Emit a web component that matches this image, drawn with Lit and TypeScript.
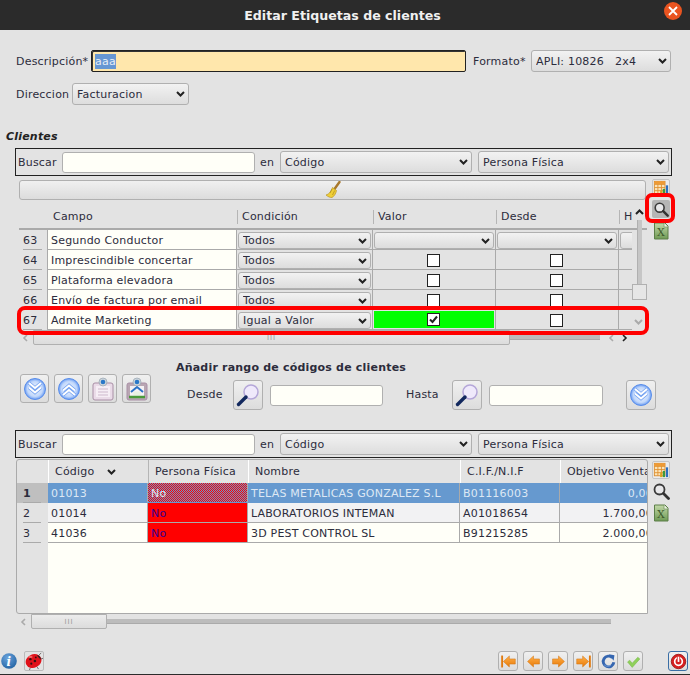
import { LitElement, html, css, svg } from "lit";
import { customElement } from "lit/decorators.js";

const chev = (c = "#222") => html`<svg class="chev" width="9" height="6" viewBox="0 0 9 6"><path d="M1 1l3.500 3.500L8 1" fill="none" stroke="${c}" stroke-width="2"/></svg>`;
const chartIcon = html`<svg viewBox="0 0 18 18" width="18" height="18"><rect x="1.500" y="1.500" width="12" height="14" fill="#fbe3b8" stroke="#d98a2b"/><path d="M1.500 5h12M1.500 8.500h12M1.500 12h12M5.500 1.500v14M9.500 1.500v14" stroke="#e0902f"/><rect x="1.500" y="1.500" width="12" height="3" fill="#ee9a35"/><rect x="8" y="12" width="2.500" height="5" fill="#d9a020"/><rect x="11" y="10" width="2.500" height="7" fill="#3d9a3d"/><rect x="14.500" y="6" width="2.500" height="11" fill="#2a6fc0"/></svg>`;
const lensIcon = html`<svg viewBox="0 0 18 18" width="18" height="18"><circle cx="7.500" cy="7.500" r="5" fill="#e8e8ea" stroke="#3a3a3a" stroke-width="1.800"/><path d="M11.500 11.500l5 5" stroke="#333" stroke-width="2.800" stroke-linecap="round"/></svg>`;
const excelIcon = html`<svg viewBox="0 0 18 18" width="18" height="18"><defs><linearGradient id="xg" x1="0" y1="0" x2="0" y2="1"><stop offset="0" stop-color="#c2d8a8"/><stop offset="1" stop-color="#6f9a55"/></linearGradient></defs><path d="M2.500 1H13l3 3v13H2.500z" fill="url(#xg)" stroke="#5d7f48"/><path d="M12 1v4h4" fill="#eef3e6" stroke="#7c9a68" stroke-width=".8"/><text x="9" y="14" font-family="DejaVu Serif" font-size="11" text-anchor="middle" fill="#3c5a2c">X</text></svg>`;
const broomIcon = html`<svg viewBox="0 0 16 18" width="16" height="18"><path d="M14.500 1L9.500 8" stroke="#a8782c" stroke-width="2.400" stroke-linecap="round"/><path d="M7.500 6.500l4 3c-.5 3-2.500 6-4.500 7-1.500.2-4-.6-6-2.500 3-.6 5-3.500 6.500-7.500z" fill="#f0cf35" stroke="#b8952a" stroke-width=".7"/><path d="M5 12l2-4M7.500 14l2.200-4.500" stroke="#a98a20" stroke-width=".7"/></svg>`;
const orbIcon = (up: boolean) => html`<svg viewBox="0 0 24 24" width="24" height="24"><defs><radialGradient id="og" cx=".5" cy=".5" r=".55"><stop offset="0" stop-color="#eef4ff"/><stop offset=".65" stop-color="#c2d8fb"/><stop offset="1" stop-color="#4a86f0"/></radialGradient></defs><circle cx="12" cy="12" r="10.500" fill="url(#og)" stroke="#5a8eea"/><path d="${up ? "M6 13.500l6-5 6 5M6 18l6-5 6 5" : "M6 6l6 5 6-5M6 10.500l6 5 6-5"}" fill="none" stroke="#6e9ef0" stroke-width="3.400"/><path d="${up ? "M6 13.500l6-5 6 5M6 18l6-5 6 5" : "M6 6l6 5 6-5M6 10.500l6 5 6-5"}" fill="none" stroke="#fff" stroke-width="2"/></svg>`;
const noteIcon = (home: boolean) => html`<svg viewBox="0 0 24 24" width="24" height="24"><rect x="2" y="6" width="20" height="17" rx="2" fill="${home ? "#b9a6b3" : "#eadbe8"}" stroke="#a98fa6"/>${home
  ? svg`<rect x="5" y="9" width="14" height="11" fill="#f4f1f4"/><path d="M6 15l6-5 6 5" fill="none" stroke="#2a72c8" stroke-width="2"/><rect x="8.500" y="14.500" width="7" height="4" fill="#e9f1e2"/><path d="M4 20h16" stroke="#4a9a3a" stroke-width="2.500"/>`
  : svg`<rect x="5" y="9" width="14" height="11" fill="#f6eef5"/><path d="M7 12h10M7 15h10M7 18h10" stroke="#cdb8cc"/>`}<circle cx="12" cy="5" r="4" fill="#cfd6dc" stroke="#8a9aa8" stroke-width=".6"/><circle cx="12" cy="5" r="2.300" fill="#2a78c8"/></svg>`;
const bigLens = html`<svg viewBox="0 0 26 26" width="26" height="26"><circle cx="16" cy="10" r="7" fill="#efe9fb" stroke="#b4a6d8" stroke-width="1.500"/><path d="M11 15l-7.500 7.500" stroke="#12285e" stroke-width="3.400" stroke-linecap="round"/></svg>`;
const navGrad = svg`<defs><linearGradient id="ng" x1="0" y1="0" x2="0" y2="1"><stop offset="0" stop-color="#ffb04a"/><stop offset="1" stop-color="#e87a08"/></linearGradient></defs>`;
const navIcons = {
  first: html`<svg viewBox="0 0 20 20" width="20" height="20">${navGrad}<path d="M2.500 3v14" stroke="#e07a10" stroke-width="2.200"/><path d="M4 10l7-6.500V7h7v6h-7v3.500z" fill="url(#ng)" stroke="#d2730e" stroke-width=".6"/></svg>`,
  prev: html`<svg viewBox="0 0 20 20" width="20" height="20">${navGrad}<path d="M3 10l7-6.500V7h7v6h-7v3.500z" fill="url(#ng)" stroke="#d2730e" stroke-width=".6"/></svg>`,
  next: html`<svg viewBox="0 0 20 20" width="20" height="20">${navGrad}<path d="M17 10l-7-6.500V7H3v6h7v3.500z" fill="url(#ng)" stroke="#d2730e" stroke-width=".6"/></svg>`,
  last: html`<svg viewBox="0 0 20 20" width="20" height="20">${navGrad}<path d="M17.500 3v14" stroke="#e07a10" stroke-width="2.200"/><path d="M16 10L9 3.500V7H2v6h7v3.500z" fill="url(#ng)" stroke="#d2730e" stroke-width=".6"/></svg>`,
};
const refreshIcon = html`<svg viewBox="0 0 20 20" width="20" height="20"><path d="M14.500 5.500A6.300 6.300 0 1 0 16.300 11" fill="none" stroke="#3566b0" stroke-width="3.400"/><path d="M10.500 1.500l6.500 1-1 6.500z" fill="#3566b0"/><path d="M5 14c2 2 6 2.500 8 0" fill="none" stroke="#7ea4dc" stroke-width="1"/></svg>`;
const checkIcon = html`<svg viewBox="0 0 20 20" width="20" height="20"><path d="M3 10.500l2.500-2 3 3.500 6.500-7 2.500 2-9 10z" fill="#8fd05a" stroke="#74b548" stroke-width=".6"/></svg>`;
const powerIcon = html`<svg viewBox="0 0 20 20" width="20" height="20"><circle cx="10" cy="10" r="8.500" fill="#d62020" stroke="#9a1010"/><circle cx="10" cy="10" r="4.500" fill="none" stroke="#fff" stroke-width="2"/><path d="M10 4.500v6" stroke="#d62020" stroke-width="4"/><path d="M10 4.500v6" stroke="#fff" stroke-width="2"/></svg>`;
const infoIcon = html`<svg viewBox="0 0 16 16" width="16" height="16"><defs><radialGradient id="ig" cx=".4" cy=".3" r=".8"><stop offset="0" stop-color="#6aa3dc"/><stop offset="1" stop-color="#1f5f9f"/></radialGradient></defs><circle cx="8" cy="8" r="7.800" fill="url(#ig)"/><text x="8" y="12.500" font-family="DejaVu Serif" font-style="italic" font-weight="700" font-size="12" text-anchor="middle" fill="#fff">i</text></svg>`;
const bugIcon = html`<svg viewBox="0 0 20 20" width="20" height="20"><path d="M15 4l3-3M17 8l3-1M13 16l2 3M6 17l-1 3" stroke="#444" stroke-width=".8"/><ellipse cx="9.500" cy="10" rx="9" ry="7.500" transform="rotate(-25 9.500 10)" fill="#e0121a"/><path d="M13 3.500a4.500 4.500 0 0 1 4.500 5z" fill="#222"/><circle cx="6" cy="8" r="1.300" fill="#311"/><circle cx="11" cy="10" r="1.400" fill="#311"/><circle cx="7" cy="13" r="1.200" fill="#311"/><circle cx="12" cy="6" r="1" fill="#311"/><ellipse cx="6" cy="5.500" rx="2.500" ry="1.200" fill="#ff8080" opacity=".7"/></svg>`;

const sel = (text: string, cls: string) => html`<div class="sel ${cls}"><select><option>${text}</option></select>${chev()}</div>`;

const searchBar = () => html`<div class="search">
  <span class="bl">Buscar</span>
  <input class="txt sinput" type="text" />
  <span class="en">en</span>
  ${sel("Código", "s1")}
  ${sel("Persona Física", "s2")}
</div>`;

@customElement("app-root")
export class AppRoot extends LitElement {
  static styles = css`
    :host { display: block; width: 690px; height: 675px; overflow: hidden; font: 11px "DejaVu Sans", sans-serif; letter-spacing: .2px; color: #2c2c3c; }
    .page { position: relative; width: 690px; height: 675px; background: #e3e3e3; display: flex; flex-direction: column; box-sizing: border-box; border-bottom: 1px solid #2b2b2b; }
    .head { height: 30px; flex: none; background: #2b2b2b; color: #f0f0f0; display: flex; align-items: center; justify-content: center; font-weight: 700; font-size: 12.600px; letter-spacing: 0; position: relative; padding-right: 5px; box-sizing: border-box; }
    .close { position: absolute; right: 8px; top: 2px; width: 18px; height: 18px; border-radius: 50%; background: #e95420; display: flex; align-items: center; justify-content: center; }
    .row1 { display: flex; align-items: center; margin: 20px 0 0 16px; height: 22px; }
    .l-desc { width: 75px; flex: none; }
    .desc { width: 375px; height: 22px; box-sizing: border-box; background: #ffe7ac; border: 1px solid #222; border-radius: 2px; box-shadow: inset 1px 1px 0 #333; padding: 3px 3px; line-height: 15px; flex: none; }
    .desc span { background: #6797d3; color: #e8eef6; display: inline-block; height: 15px; line-height: 15px; }
    .fmt { margin-left: 7px; width: 58px; flex: none; }
    .row2 { display: flex; align-items: center; margin: 11px 0 0 16px; height: 22px; }
    .l-dir { width: 56px; flex: none; }
    .clientes { margin: 25px 0 0 6px; font-weight: 700; font-style: italic; height: 13px; line-height: 13px; color: #222; }
    .sel { position: relative; height: 22px; box-sizing: border-box; flex: none; }
    .sel select { appearance: none; -webkit-appearance: none; width: 100%; height: 100%; box-sizing: border-box; border: 1px solid #b0b0b0; border-radius: 3px; background: linear-gradient(#f2f2f2, #dddddd); font: 11px "DejaVu Sans", sans-serif; letter-spacing: .2px; color: #2c2c3c; padding: 0 14px 0 4px; margin: 0; outline: 0; }
    .chev { position: absolute; right: 4px; top: 8px; pointer-events: none; }
    .s-fmt { width: 140px; }
    .s-dir { width: 117px; }
    .s1 { width: 192px; margin-left: 5px; }
    .s2 { width: 191px; margin-left: 6px; }
    .txt { box-sizing: border-box; height: 21px; background: #fffff8; border: 1px solid #b0b0b0; border-radius: 3px; padding: 0 3px; margin: 0; outline: 0; flex: none; }
    .search { display: flex; align-items: center; box-sizing: border-box; width: 657px; height: 28px; margin-left: 15px; border: 1px solid #222; padding-left: 2px; flex: none; }
    .bl { width: 44px; flex: none; }
    .sinput { width: 193px; }
    .en { margin-left: 5px; width: 15px; flex: none; }
    .s-top { margin-top: 5px; }
    .g1wrap { display: flex; margin: 4px 0 0 19px; gap: 5px; height: 165px; flex: none; }
    .g1 { position: relative; width: 628px; flex: none; }
    .broom { height: 20px; box-sizing: border-box; width: 627px; border: 1px solid #b0b0b0; border-radius: 3px; background: linear-gradient(#f0f0f0, #dcdcdc); display: flex; justify-content: center; align-items: center; }
    .cols { display: grid; grid-template-columns: 28px 190px 136px 123px 123px 13px; }
    .hdr { height: 30px; box-sizing: border-box; padding-top: 10px; line-height: 14px; border-bottom: 2px solid #aaa; overflow: hidden; }
    .hc { border-left: 1px solid #b5b5b5; padding-left: 4px; height: 14px; white-space: nowrap; overflow: hidden; }
    .hc.first { border-left: 0; padding-left: 6px; }
    .hcorner { height: 14px; }
    .row { height: 20px; box-sizing: border-box; }
    .row > div { border-bottom: 1px solid #aaa; box-sizing: border-box; height: 20px; display: flex; align-items: center; overflow: hidden; padding-top: 1px; }
    .row > .n { border-bottom: 0; position: relative; padding-left: 4px; }
    .n::after { content: ""; position: absolute; left: 4px; right: 5px; bottom: 0; height: 1px; background: #aaa; }
    .row > .campo { background: #fffff8; border-left: 1px solid #aaa; border-right: 1px solid #aaa; padding-left: 3px; white-space: nowrap; }
    .row > .c { border-right: 1px solid #aaa; justify-content: center; padding: 1px 1px 0; position: relative; }
    .row > .cbc { padding: 1px 2px 0 0; }
    .row > .last { border-right: 0; justify-content: flex-start; }
    .csel { width: 100%; height: 17px; }
    .csel select { padding-left: 4px; }
    .csel .chev { top: 6px; }
    .stub { width: 30px; flex: none; }
    .row > .green { padding: 1px 1px 1px 1px; }
    .green-fill { background: #00ff00; flex: 1; height: 100%; display: flex; align-items: center; justify-content: center; padding-right: 1px; box-sizing: border-box; }
    .cb { width: 13px; height: 13px; box-sizing: border-box; background: #fff; border: 1px solid #222; display: flex; align-items: center; justify-content: center; flex: none; }
    .vbar { position: absolute; left: 613px; top: 25px; width: 15px; height: 95px; }
    .vtrack { position: absolute; left: 5px; top: 15px; width: 5px; height: 64px; background: #c6c6c6; border-left: 1px solid #b0b0b0; box-sizing: border-box; }
    .vthumb { position: absolute; left: 0; top: 79px; width: 15px; height: 16px; box-sizing: border-box; border: 1px solid #b0b0b0; background: #e6e6e6; }
    .varrow { position: absolute; left: 3px; top: 4px; }
    .hbar { position: relative; height: 15px; }
    .arrow { position: absolute; top: 4px; }
    .htrack { position: absolute; top: 5px; height: 5px; background: #bcbcbc; border-bottom: 1px solid #aaa; box-sizing: border-box; }
    .hthumb { position: absolute; top: 0; height: 15px; box-sizing: border-box; border: 1px solid #b0b0b0; border-radius: 0 0 2px 2px; background: linear-gradient(#ececec, #dcdcdc); display: flex; align-items: center; justify-content: center; color: #999; font-size: 7px; letter-spacing: 1px; }
    .a-l1 { left: 3px; }
    .t-1 { left: 14px; width: 567px; }
    .th-1 { left: 14px; width: 477px; }
    .a-r1 { left: 589px; }
    .a-r2 { left: 603px; }
    .a-l2 { left: 20px; }
    .t-2 { left: 31px; width: 580px; }
    .th-2 { left: 31px; width: 76px; }
    .tools { display: flex; flex-direction: column; width: 18px; }
    .tool { width: 18px; height: 18px; flex: none; }
    .framed { box-sizing: border-box; border: 1px solid #c4c4c4; border-radius: 2px; background: #ececec; overflow: hidden; }
    .framed svg { width: 16px; height: 16px; display: block; }
    .t1 { margin-top: -1px; }
    .t2 { margin-top: 3px; padding: 1px; background: #b5b5b5; box-sizing: border-box; border-radius: 2px; }
    .t2 svg { width: 16px; height: 16px; display: block; }
    .t3 { margin-top: 4px; }
    .rtitle { margin: 16px 0 0 176px; font-weight: 700; height: 13px; line-height: 13px; flex: none; }
    .rbody { display: flex; margin: 0 0 0 20px; height: 42px; flex: none; }
    .bt { width: 29px; height: 29px; box-sizing: border-box; border: 1px solid #b0b0b0; border-radius: 3px; background: linear-gradient(#f0f0f0, #dcdcdc); display: flex; align-items: center; justify-content: center; flex: none; margin-left: 5px; }
    .bt.firstb { margin-left: 0; }
    .bt.big { width: 30px; height: 30px; margin-top: 6px; }
    .l-d { margin-left: 36px; width: 35px; }
    .l-h { margin-left: 23px; width: 32px; }
    .m-11 { margin-left: 11px; }
    .m-14 { margin-left: 14px; }
    .m-23 { margin-left: 23px; }
    .rl { margin-top: 6px; height: 30px; line-height: 30px; flex: none; }
    .rtxt { margin: 11px 0 0 7px; height: 21px; }
    .w-113 { width: 113px; }
    .w-114 { width: 114px; }
    .search2 { margin-top: 14px; }
    .g2wrap { display: flex; margin: 1px 0 0 16px; gap: 4px; height: 155px; flex: none; }
    .g2 { width: 632px; height: 155px; box-sizing: border-box; border: 1px solid #aaa; border-radius: 3px 3px 0 3px; display: flex; flex-direction: column; overflow: hidden; flex: none; }
    .cols2 { display: grid; grid-template-columns: 31px 100px 100px 212px 100px 97px; width: 640px; }
    .h2 { height: 23px; flex: none; }
    .h2 > div { height: 23px; box-sizing: border-box; padding-left: 6px; line-height: 24px; white-space: nowrap; overflow: hidden; border-left: 1px solid #fff; }
    .h2 > .nc { border-left: 0; }
    .h2 > .pf { border-left: 1px solid #b5b5b5; }
    .scv { display: inline-block; margin-left: 13px; }
    .r2 { height: 20px; flex: none; }
    .r2 > div { height: 20px; box-sizing: border-box; padding: 0 3px; line-height: 21px; border-bottom: 1px solid #aaa; border-right: 1px solid #aaa; white-space: nowrap; overflow: hidden; background: #fffff8; }
    .r2 > .n2 { border: 0; background: #e3e3e3; padding-left: 6px; position: relative; }
    .n2::after { content: ""; position: absolute; left: 6px; right: 7px; bottom: 0; height: 1px; background: #aaa; }
    .r2.alt > div:not(.n2) { background: #f2f2f3; }
    .r2.sel1 > div:not(.n2) { background: #6699cf; color: #dde8f4; border-color: #6699cf; border-right-color: #aaa; }
    .r2.sel1 > .n2 { background: #bfbfbf; font-weight: 700; }
    .r2 > .red, .r2.alt > .red:not(.n2) { background: #ff0000; color: #3a0090; }
    .r2.sel1 > .dith:not(.n2) { background-color: #ff0000; background-image: url("data:image/svg+xml,%3Csvg xmlns='http://www.w3.org/2000/svg' width='2' height='2' shape-rendering='crispEdges'%3E%3Crect width='1' height='1' fill='%236699cf'/%3E%3Crect x='1' y='1' width='1' height='1' fill='%236699cf'/%3E%3C/svg%3E"); background-size: 2px 2px; color: #dde8f4; }
    .r2 > .num { text-align: right; }
    .fill { flex: 1; display: flex; }
    .fill .nf { width: 31px; }
    .fill .bf { flex: 1; background: #fffff8; }
    .hbar2 { position: relative; height: 17px; flex: none; }
    .tools2 { display: flex; flex-direction: column; }
    .tools2 .t1 { margin-top: 2px; }
    .tools2 .t2n { margin-top: 3px; }
    .tools2 .t3n { margin-top: 4px; }
    .foot { display: flex; align-items: center; margin-top: 20px; height: 20px; flex: none; }
    .infob { margin-left: 1px; width: 16px; height: 16px; }
    .bugb { margin-left: 7px; width: 20px; height: 20px; border: 1px solid #bbb; border-radius: 2px; box-sizing: border-box; overflow: hidden; }
    .bugb svg { width: 18px; height: 18px; display: block; }
    .fb { width: 20px; height: 20px; box-sizing: border-box; border: 1px solid #b0b0b0; border-radius: 3px; background: linear-gradient(#f0f0f0, #dcdcdc); display: flex; align-items: center; justify-content: center; margin-left: 5px; flex: none; }
    .fb.firstb { margin-left: 0; }
    .fb svg { width: 17px; height: 17px; display: block; }
    .fb.pw { margin-left: 25px; border: 1.500px solid #3a6ea5; }
    .fspace { flex: 1; }
    .fr { display: flex; margin-right: 2px; }
    .redbox { position: absolute; box-sizing: border-box; border: 4px solid #ff0000; pointer-events: none; }
    .rb1 { left: 17px; top: 306px; width: 632px; height: 29px; border-radius: 8px; }
    .rb2 { left: 645px; top: 193px; width: 30px; height: 30px; border-radius: 7px; }
    .downarr { position: absolute; left: 634px; top: 319px; }
  `;

  private campoRow(n: number, campo: string, cond: string, kind: "sel" | "cb" | "on" = "cb") {
    return html`<div class="cols row">
      <div class="n">${n}</div>
      <div class="campo">${campo}</div>
      <div class="c">${sel(cond, "csel")}</div>
      ${kind === "sel"
        ? html`<div class="c">${sel("", "csel")}</div><div class="c">${sel("", "csel")}</div><div class="c last"><div class="sel csel stub"><select><option></option></select></div></div>`
        : html`${kind === "on"
              ? html`<div class="c green"><div class="green-fill"><div class="cb"><svg width="9" height="9" viewBox="0 0 9 9"><path d="M1 4.500l2.500 2.500L8 1.500" fill="none" stroke="#222" stroke-width="2"/></svg></div></div></div>`
              : html`<div class="c cbc"><div class="cb"></div></div>`}
            <div class="c cbc"><div class="cb"></div></div>
            <div class="c last"></div>`}
    </div>`;
  }

  render() {
    return html`<div class="page">
      <div class="head">Editar Etiquetas de clientes
        <div class="close"><svg width="10" height="10" viewBox="0 0 10 10"><path d="M1 1l8 8M9 1l-8 8" stroke="#fff" stroke-width="1.800"/></svg></div>
      </div>
      <div class="row1">
        <span class="l-desc">Descripción*</span>
        <div class="desc"><span>aaa</span></div>
        <span class="fmt">Formato*</span>
        ${sel("APLI: 10826\u00a0\u00a0\u00a02x4", "s-fmt")}
      </div>
      <div class="row2"><span class="l-dir">Direccion</span>${sel("Facturacion", "s-dir")}</div>
      <div class="clientes">Clientes</div>
      <div class="s-top">${searchBar()}</div>
      <div class="g1wrap">
        <div class="g1">
          <div class="broom">${broomIcon}</div>
          <div class="cols hdr">
            <div class="hcorner"></div>
            <div class="hc first">Campo</div>
            <div class="hc">Condición</div>
            <div class="hc">Valor</div>
            <div class="hc">Desde</div>
            <div class="hc">H</div>
          </div>
          ${this.campoRow(63, "Segundo Conductor", "Todos", "sel")}
          ${this.campoRow(64, "Imprescindible concertar", "Todos")}
          ${this.campoRow(65, "Plataforma elevadora", "Todos")}
          ${this.campoRow(66, "Envío de factura por email", "Todos")}
          ${this.campoRow(67, "Admite Marketing", "Igual a Valor", "on")}
          <div class="hbar">
            <svg class="arrow a-l1" width="6" height="8" viewBox="0 0 6 8"><path d="M5 1L2 4l3 3" fill="none" stroke="#aaa" stroke-width="1.600"/></svg>
            <div class="htrack t-1"></div>
            <div class="hthumb th-1">III</div>
            <svg class="arrow a-r1" width="6" height="8" viewBox="0 0 6 8"><path d="M5 1L2 4l3 3" fill="none" stroke="#aaa" stroke-width="1.600"/></svg>
            <svg class="arrow a-r2" width="6" height="8" viewBox="0 0 6 8"><path d="M1 1l3 3-3 3" fill="none" stroke="#222" stroke-width="1.600"/></svg>
          </div>
          <div class="vbar">
            <svg class="varrow" width="9" height="6" viewBox="0 0 9 6"><path d="M1 5l3.500-3.500L8 5" fill="none" stroke="#222" stroke-width="2"/></svg>
            <div class="vtrack"></div>
            <div class="vthumb"></div>
          </div>
        </div>
        <div class="tools">
          <div class="tool t1 framed">${chartIcon}</div>
          <div class="tool t2">${lensIcon}</div>
          <div class="tool t3">${excelIcon}</div>
        </div>
      </div>
      <div class="rtitle">Añadir rango de códigos de clientes</div>
      <div class="rbody">
        <div class="bt firstb">${orbIcon(false)}</div>
        <div class="bt">${orbIcon(true)}</div>
        <div class="bt">${noteIcon(false)}</div>
        <div class="bt">${noteIcon(true)}</div>
        <span class="rl l-d">Desde</span>
        <div class="bt big m-11">${bigLens}</div>
        <input class="txt rtxt w-113" type="text" />
        <span class="rl l-h">Hasta</span>
        <div class="bt big m-14">${bigLens}</div>
        <input class="txt rtxt w-114" type="text" />
        <div class="bt big m-23">${orbIcon(false)}</div>
      </div>
      <div class="search2">${searchBar()}</div>
      <div class="g2wrap">
        <div class="g2">
          <div class="cols2 h2">
            <div class="nc"></div>
            <div>Código<svg class="scv" width="9" height="6" viewBox="0 0 9 6"><path d="M1 1l3.500 3.500L8 1" fill="none" stroke="#222" stroke-width="2"/></svg></div>
            <div class="pf">Persona Física</div>
            <div>Nombre</div>
            <div>C.I.F./N.I.F</div>
            <div>Objetivo Ventas</div>
          </div>
          <div class="cols2 r2 sel1"><div class="n2">1</div><div>01013</div><div class="dith">No</div><div>TELAS METALICAS GONZALEZ S.L</div><div>B01116003</div><div class="num">0,00</div></div>
          <div class="cols2 r2 alt"><div class="n2">2</div><div>01014</div><div class="red">No</div><div>LABORATORIOS INTEMAN</div><div>A01018654</div><div class="num">1.700,00</div></div>
          <div class="cols2 r2"><div class="n2">3</div><div>41036</div><div class="red">No</div><div>3D PEST CONTROL SL</div><div>B91215285</div><div class="num">2.000,00</div></div>
          <div class="fill"><div class="nf"></div><div class="bf"></div></div>
        </div>
        <div class="tools2">
          <div class="tool t1 framed">${chartIcon}</div>
          <div class="tool t2n">${lensIcon}</div>
          <div class="tool t3n">${excelIcon}</div>
        </div>
      </div>
      <div class="hbar2">
        <svg class="arrow a-l2" width="6" height="8" viewBox="0 0 6 8"><path d="M5 1L2 4l3 3" fill="none" stroke="#aaa" stroke-width="1.600"/></svg>
        <div class="htrack t-2"></div>
        <div class="hthumb th-2">III</div>
      </div>
      <div class="foot">
        <div class="infob">${infoIcon}</div>
        <div class="bugb">${bugIcon}</div>
        <div class="fspace"></div>
        <div class="fr">
          <div class="fb firstb">${navIcons.first}</div>
          <div class="fb">${navIcons.prev}</div>
          <div class="fb">${navIcons.next}</div>
          <div class="fb">${navIcons.last}</div>
          <div class="fb">${refreshIcon}</div>
          <div class="fb">${checkIcon}</div>
          <div class="fb pw">${powerIcon}</div>
        </div>
      </div>
      <div class="redbox rb1"></div>
      <div class="redbox rb2"></div>
      <svg class="downarr" width="9" height="6" viewBox="0 0 9 6"><path d="M1 1l3.500 3.500L8 1" fill="none" stroke="#aaa" stroke-width="2"/></svg>
    </div>`;
  }
}
